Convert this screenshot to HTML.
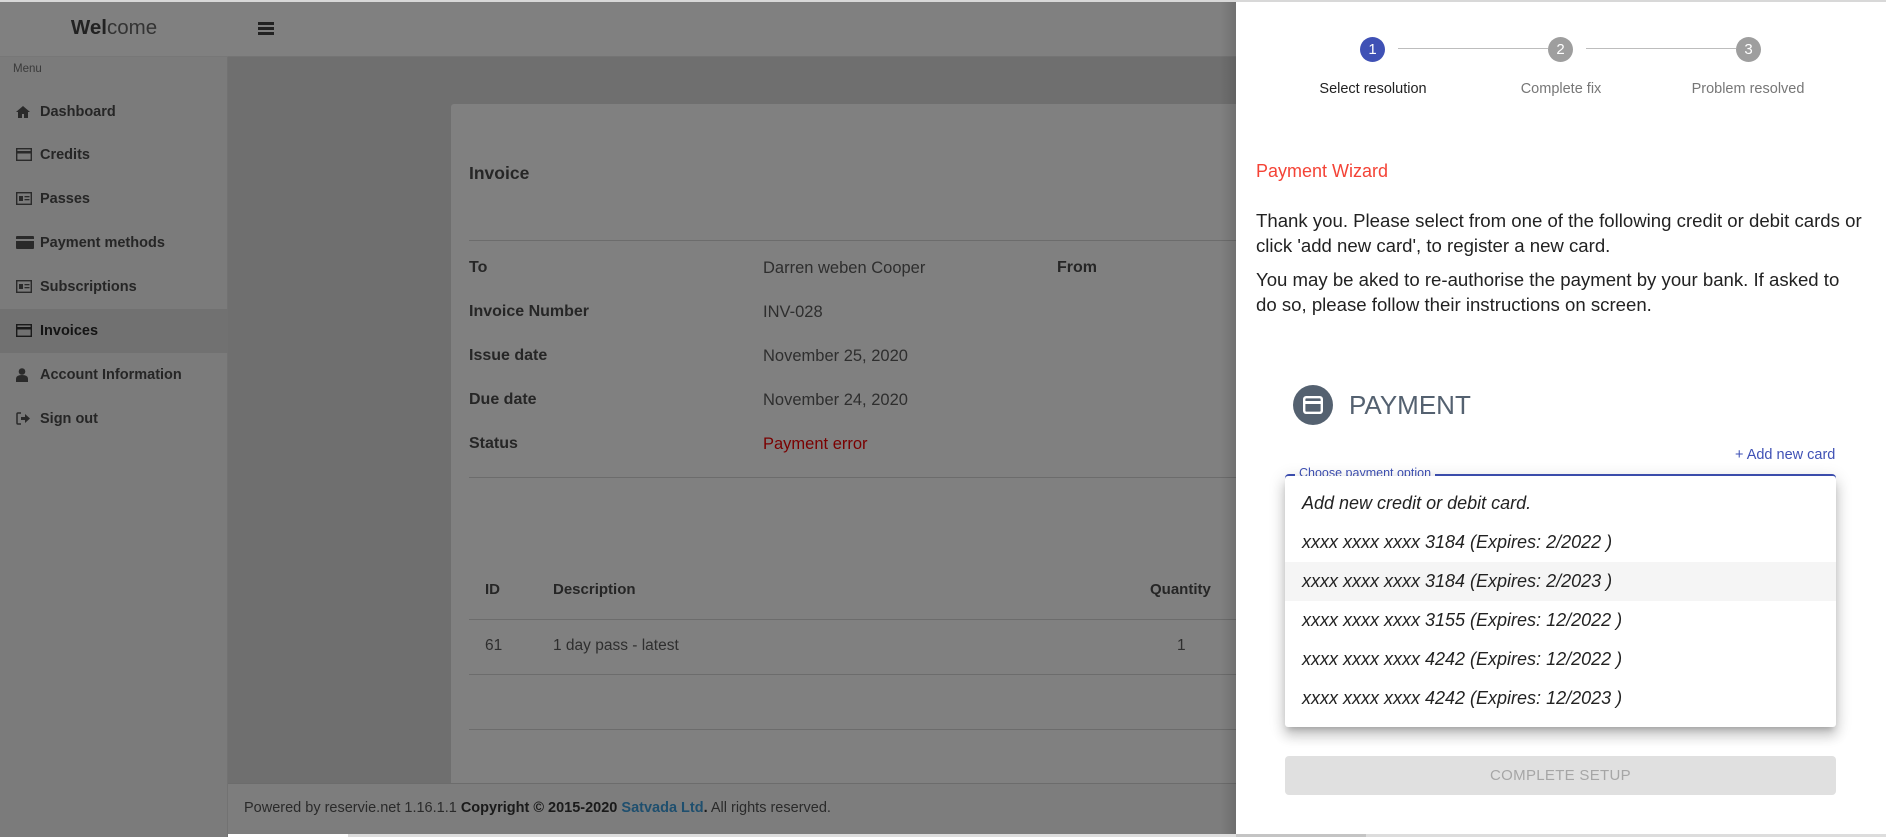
<!DOCTYPE html>
<html><head><meta charset="utf-8"><style>
*{margin:0;padding:0;box-sizing:border-box}
body{width:1886px;height:837px;overflow:hidden;position:relative;background:#6f6f6f;font-family:"Liberation Sans",sans-serif}
.a{position:absolute;white-space:nowrap}
.side{left:0;top:0;width:228px;height:837px;background:#7b7b7b;border-right:1px solid #727272}
.hdr{left:228px;top:0;width:1008px;height:57px;background:#808080;border-bottom:1px solid #747474}
.si{left:0;width:228px;height:44px;font-size:14.5px;font-weight:bold;color:#262626;line-height:44px;padding-left:40px}
.si svg{position:absolute;left:16px;top:15px}
.card{left:451px;top:104px;width:800px;height:690px;background:#808080;border-radius:3px}
.lb{font-size:16px;font-weight:bold;color:#262626}
.vl{font-size:16.5px;color:#2e2e2e}
.hl{height:1px;background:#6c6c6c}
.step{width:25px;height:25px;border-radius:50%;color:#fff;font-size:15px;text-align:center;line-height:25px}
.sl{font-size:14.5px;color:#777;transform:translateX(-50%)}
.p{font-size:18.6px;color:#222;left:1256px}
.mi{left:1285px;width:551px;height:39px;line-height:39px;padding-left:17px;font-size:18px;font-style:italic;color:#222}
</style></head><body>
<div class="a" style="left:0;top:0;width:1886px;height:2px;background:#d8d8d8;z-index:5"></div>
<div class="a side"></div>
<div class="a" style="left:0;top:0;width:228px;height:57px;background:#808080;border-bottom:1px solid #777"></div>
<div class="a" style="left:0;top:16px;width:228px;text-align:center;font-size:20.5px;color:#222"><b>Wel</b><span style="color:#333">come</span></div>
<div class="a hdr"></div>
<div class="a" style="left:258px;top:22px;width:16px;height:3px;background:#222;box-shadow:0 5px 0 #222,0 10px 0 #222"></div>
<div class="a" style="left:13px;top:63px;font-size:11.5px;color:#3a3a3a">Menu</div>
<div class="a si" style="top:90px"><svg width="14" height="13" viewBox="0 0 14 13"><path d="M7 1L0 7h2v6h4V9h2v4h4V7h2z" fill="#2a2a2a"/></svg>Dashboard</div>
<div class="a si" style="top:133px"><svg width="16" height="13" viewBox="0 0 16 13"><rect x="0.7" y="0.7" width="14.6" height="11.6" fill="none" stroke="#2a2a2a" stroke-width="1.4"/><rect x="1" y="3" width="14" height="2.5" fill="#2a2a2a"/></svg>Credits</div>
<div class="a si" style="top:177px"><svg width="16" height="13" viewBox="0 0 16 13"><rect x="0.7" y="0.7" width="14.6" height="11.6" fill="none" stroke="#2a2a2a" stroke-width="1.4"/><rect x="3" y="4" width="4" height="5" fill="#2a2a2a"/><rect x="8.5" y="4" width="5" height="1.3" fill="#2a2a2a"/><rect x="8.5" y="7" width="5" height="1.3" fill="#2a2a2a"/></svg>Passes</div>
<div class="a si" style="top:221px"><svg width="18" height="13" viewBox="0 0 18 13"><rect x="0" y="0" width="18" height="13" rx="1" fill="#2a2a2a"/><rect x="0" y="3" width="18" height="2" fill="#7b7b7b"/></svg>Payment methods</div>
<div class="a si" style="top:265px"><svg width="16" height="13" viewBox="0 0 16 13"><rect x="0.7" y="0.7" width="14.6" height="11.6" fill="none" stroke="#2a2a2a" stroke-width="1.4"/><rect x="3" y="4" width="4" height="5" fill="#2a2a2a"/><rect x="8.5" y="4" width="5" height="1.3" fill="#2a2a2a"/><rect x="8.5" y="7" width="5" height="1.3" fill="#2a2a2a"/></svg>Subscriptions</div>
<div class="a si" style="top:309px;background:#717171;color:#141414"><svg width="16" height="13" viewBox="0 0 16 13"><rect x="0.7" y="0.7" width="14.6" height="11.6" fill="none" stroke="#1a1a1a" stroke-width="1.4"/><rect x="1" y="3" width="14" height="2.5" fill="#1a1a1a"/></svg>Invoices</div>
<div class="a si" style="top:353px"><svg width="12" height="14" viewBox="0 0 12 14"><circle cx="6" cy="3.5" r="3.3" fill="#2a2a2a"/><path d="M0 14v-3q0-4 6-4t6 4v3z" fill="#2a2a2a"/></svg>Account Information</div>
<div class="a si" style="top:397px"><svg width="14" height="13" viewBox="0 0 14 13"><path d="M5 1H2Q1 1 1 2v9q0 1 1 1h3" fill="none" stroke="#2a2a2a" stroke-width="1.5"/><path d="M5 5h4V2l5 4.5-5 4.5V8H5z" fill="#2a2a2a"/></svg>Sign out</div>

<div class="a card"></div>
<div class="a" style="left:469px;top:163px;font-size:17.5px;font-weight:bold;color:#262626">Invoice</div>
<div class="a hl" style="left:469px;top:240px;width:767px"></div>
<div class="a lb" style="left:469px;top:259px">To</div>
<div class="a vl" style="left:763px;top:259px">Darren weben Cooper</div>
<div class="a lb" style="left:1057px;top:259px">From</div>
<div class="a lb" style="left:469px;top:303px">Invoice Number</div>
<div class="a vl" style="left:763px;top:303px">INV-028</div>
<div class="a lb" style="left:469px;top:347px">Issue date</div>
<div class="a vl" style="left:763px;top:347px">November 25, 2020</div>
<div class="a lb" style="left:469px;top:391px">Due date</div>
<div class="a vl" style="left:763px;top:391px">November 24, 2020</div>
<div class="a lb" style="left:469px;top:435px">Status</div>
<div class="a vl" style="left:763px;top:435px;color:#7a0000">Payment error</div>
<div class="a hl" style="left:469px;top:477px;width:767px"></div>
<div class="a lb" style="left:485px;top:581px;font-size:15px">ID</div>
<div class="a lb" style="left:553px;top:581px;font-size:15px">Description</div>
<div class="a lb" style="left:1150px;top:581px;font-size:15px">Quantity</div>
<div class="a hl" style="left:469px;top:619px;width:767px"></div>
<div class="a vl" style="left:485px;top:637px;font-size:15.5px">61</div>
<div class="a vl" style="left:553px;top:637px;font-size:15.5px">1 day pass - latest</div>
<div class="a vl" style="left:1177px;top:637px;font-size:15.5px">1</div>
<div class="a hl" style="left:469px;top:674px;width:767px"></div>
<div class="a hl" style="left:469px;top:729px;width:767px"></div>

<div class="a" style="left:228px;top:783px;width:1008px;height:54px;background:#7d7d7d;border-top:1px solid #6c6c6c"></div>
<div class="a" style="left:244px;top:800px;font-size:14.5px;color:#2a2a2a">Powered by reservie.net 1.16.1.1 <b style="color:#1a1a1a">Copyright © 2015-2020 <span style="color:#1f4f6e">Satvada Ltd</span>.</b> All rights reserved.</div>
<div class="a" style="left:1220px;top:0;width:16px;height:837px;background:linear-gradient(to right,rgba(0,0,0,0),rgba(0,0,0,0.12))"></div>

<div class="a" style="left:1236px;top:0;width:650px;height:837px;background:#fff"></div>
<div class="a" style="left:1398px;top:48px;width:150px;height:1px;background:#bdbdbd"></div>
<div class="a" style="left:1586px;top:48px;width:150px;height:1px;background:#bdbdbd"></div>
<div class="a step" style="left:1360px;top:37px;background:#3f51b5">1</div>
<div class="a step" style="left:1548px;top:37px;background:#9e9e9e">2</div>
<div class="a step" style="left:1736px;top:37px;background:#9e9e9e">3</div>
<div class="a sl" style="left:1373px;top:81px;color:#222;font-weight:500">Select resolution</div>
<div class="a sl" style="left:1561px;top:81px">Complete fix</div>
<div class="a sl" style="left:1748px;top:81px">Problem resolved</div>
<div class="a" style="left:1256px;top:161px;font-size:18px;color:#f44336">Payment Wizard</div>
<div class="a p" style="top:210px">Thank you. Please select from one of the following credit or debit cards or</div>
<div class="a p" style="top:235px">click 'add new card', to register a new card.</div>
<div class="a p" style="top:269px">You may be aked to re-authorise the payment by your bank. If asked to</div>
<div class="a p" style="top:294px">do so, please follow their instructions on screen.</div>
<div class="a" style="left:1293px;top:385px;width:40px;height:40px;border-radius:50%;background:#546170"></div>
<svg class="a" style="left:1303px;top:396px" width="20" height="18" viewBox="0 0 20 18"><rect x="1.2" y="1.2" width="17.6" height="15.6" rx="2" fill="none" stroke="#fff" stroke-width="2.4"/><rect x="2" y="5" width="16" height="3" fill="#fff"/></svg>
<div class="a" style="left:1349px;top:390px;font-size:26px;color:#546170">PAYMENT</div>
<div class="a" style="left:1735px;top:447px;font-size:14.5px;color:#3f51b5">+ Add new card</div>
<div class="a" style="left:1285px;top:474px;width:551px;height:20px;border:2px solid #3f51b5;border-bottom:none;border-radius:4px 4px 0 0"></div>
<div class="a" style="left:1295px;top:466px;background:#fff;padding:0 4px;font-size:12.5px;color:#3f51b5;height:10px;overflow:hidden">Choose payment option</div>
<div class="a" style="left:1285px;top:476px;width:551px;height:251px;background:#fff;border-radius:3px;box-shadow:0 5px 6px -3px rgba(0,0,0,.2),0 9px 12px 1px rgba(0,0,0,.14),0 3px 16px 2px rgba(0,0,0,.12)"></div>
<div class="a mi" style="top:484px">Add new credit or debit card.</div>
<div class="a mi" style="top:523px">xxxx xxxx xxxx 3184 (Expires: 2/2022 )</div>
<div class="a mi" style="top:562px;background:#f5f5f5">xxxx xxxx xxxx 3184 (Expires: 2/2023 )</div>
<div class="a mi" style="top:601px">xxxx xxxx xxxx 3155 (Expires: 12/2022 )</div>
<div class="a mi" style="top:640px">xxxx xxxx xxxx 4242 (Expires: 12/2022 )</div>
<div class="a mi" style="top:679px">xxxx xxxx xxxx 4242 (Expires: 12/2023 )</div>
<div class="a" style="left:1285px;top:756px;width:551px;height:39px;background:#e0e0e0;border-radius:4px;text-align:center;line-height:39px;font-size:15px;color:#a6a6a6;letter-spacing:.3px">COMPLETE SETUP</div>
<div class="a" style="left:228px;top:834px;width:1658px;height:3px;background:#ddd"></div>
<div class="a" style="left:1236px;top:834px;width:130px;height:3px;background:#c4c4c4"></div>
<div class="a" style="left:228px;top:834px;width:120px;height:3px;background:#fff"></div>
</body></html>
